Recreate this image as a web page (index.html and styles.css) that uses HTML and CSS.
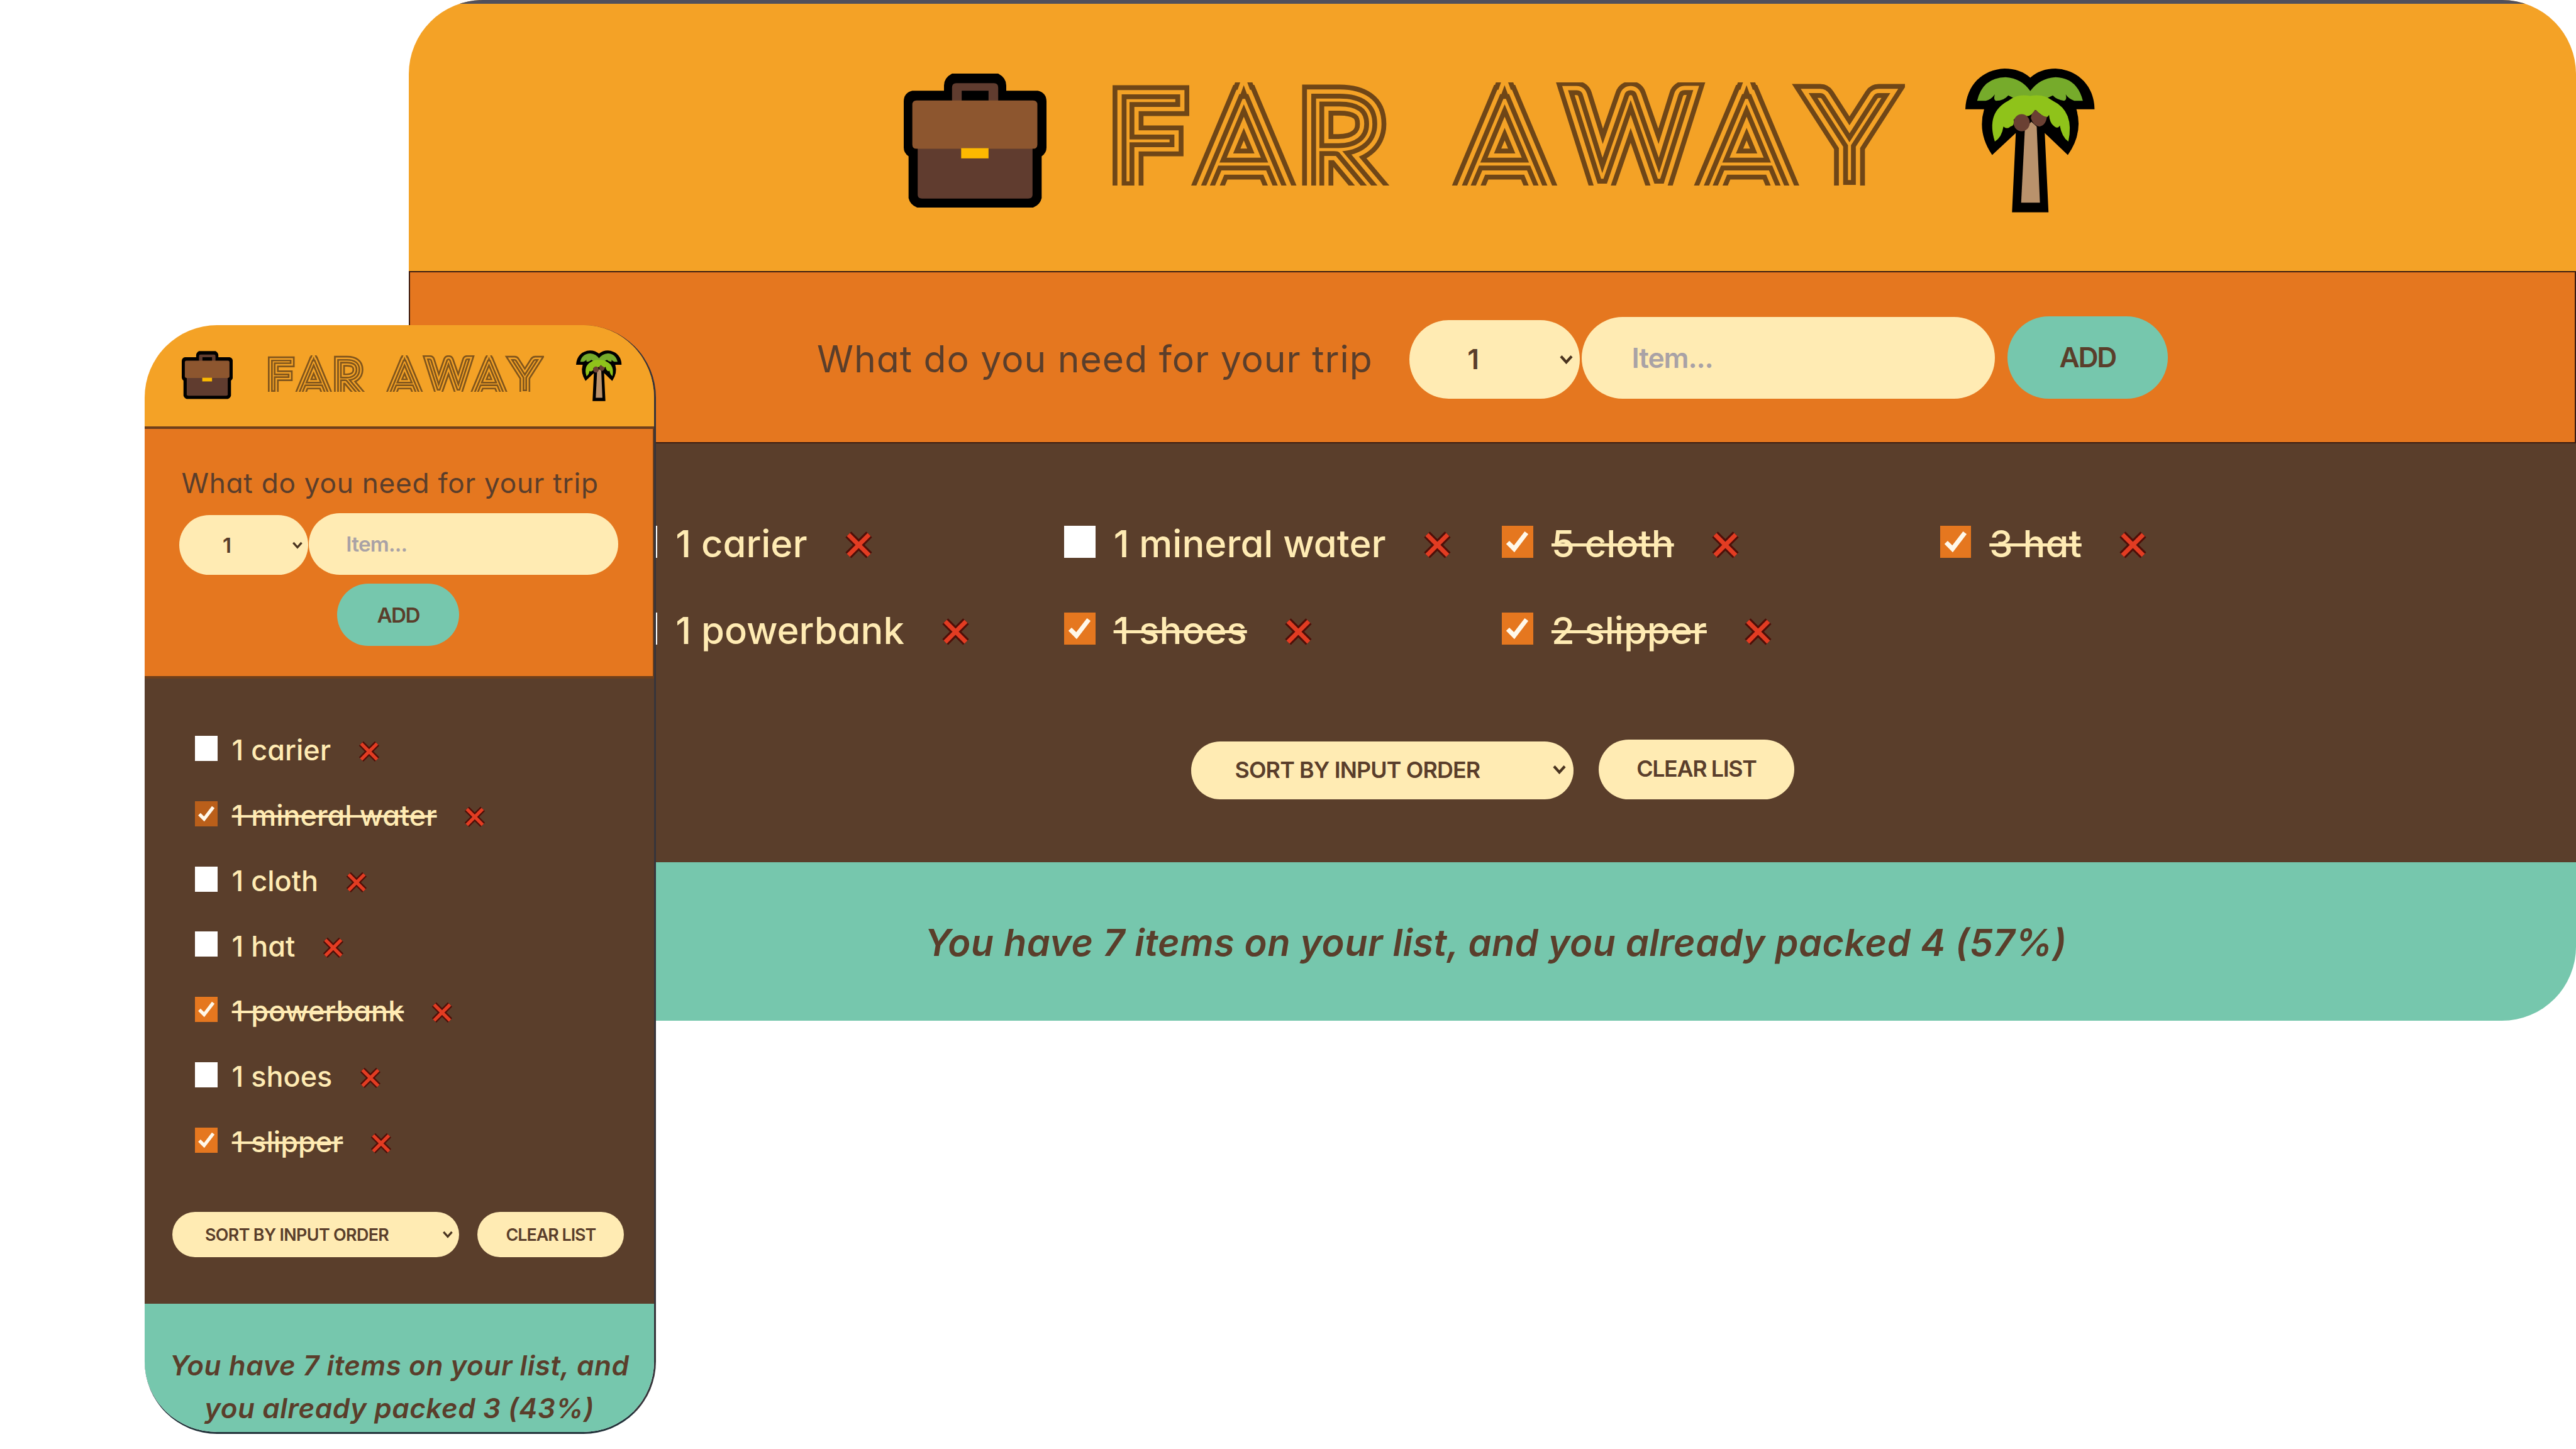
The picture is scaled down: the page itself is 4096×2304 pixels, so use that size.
FILE: index.html
```html
<!DOCTYPE html>
<html lang="en">
<head>
<meta charset="utf-8">
<title>Far Away</title>
<link rel="stylesheet" href="styles.css">
</head>
<body>
<svg class="sprite" width="0" height="0" aria-hidden="true">
  <symbol id="briefcase" viewBox="0 0 266 250">
    <path d="M75 32V22Q75 8 90 0H176Q191 8 191 22V32H250Q266 36 266 52V138Q266 148 257 154V232Q254 245 240 250H26Q12 245 9 232V154Q0 148 0 138V52Q0 36 16 32Z" fill="#000"/>
    <path d="M90 52V26Q90 18 98 18H168Q176 18 176 26V52H158V32H108V52Z" fill="#603c2f"/>
    <path d="M26 132H240V226Q240 233 232 233H34Q26 233 26 226Z" fill="#603c2f"/>
    <path d="M24 50H241Q249 50 249 58V132Q249 140 241 140H24Q16 140 16 132V58Q16 50 24 50Z" fill="#8d562f"/>
    <rect x="107" y="139" width="51" height="19" fill="#fdb900"/>
  </symbol>
  <symbol id="palm" viewBox="0 0 241 268">
    <path d="M73 0Q102 0 121 17Q140 0 168 0C208 2 240 30 241 76H207Q220 120 191 161L148 120L155 268H87L94 120L50 161Q22 120 35 76H0C2 30 32 2 73 0Z" fill="#000"/>
    <path d="M22 60Q32 17 75 16Q105 18 121 42Q138 18 168 16Q208 17 219 60H203Q192 56 187 48Q190 58 184 60Q170 58 163 50L121 70L80 50Q72 60 57 60Q52 58 55 48Q48 58 38 60Z" fill="#76ab2b"/>
    <path d="M121 51Q145 46 163 60Q204 80 192 136Q180 128 176 106Q172 114 164 106Q157 100 156 86Q152 94 144 88L130 77Q122 92 108 88L90 95Q92 108 84 108Q78 114 71 108Q68 128 55 136Q38 82 80 60Q97 46 121 51Z" fill="#8fc31a"/>
    <path d="M111 112L123 99L133 108L139 250H104Z" fill="#b9926c"/>
    <ellipse cx="105" cy="101" rx="15" ry="16" fill="#6a4033"/>
    <path d="M122 92Q124 80 132 77Q140 88 152 90Q150 106 138 108Q126 106 122 92Z" fill="#6a4033"/>
  </symbol>
  <symbol id="cross" viewBox="0 0 54 54">
    <path d="M8 8L46 46M46 8L8 46" stroke="#4d0f08" stroke-width="15" fill="none"/>
    <path d="M8 8L46 46M46 8L8 46" stroke="#e23c22" stroke-width="8" fill="none"/>
  </symbol>
  <symbol id="tick" viewBox="0 0 58 60">
    <path d="M11 31L23 43L46 13" stroke="#fff8ea" stroke-width="8.5" fill="none"/>
  </symbol>
  <symbol id="chevron" viewBox="0 0 26 18">
    <path d="M3 3L13 14L23 3" stroke="#4a3420" stroke-width="5" fill="none"/>
  </symbol>
</svg>

<main class="desktop">
  <header class="header">
    <svg class="bag"><use href="#briefcase"/></svg>
    <svg class="logo" viewBox="0 0 1480 192">
      <g class="line1"><text id="logo-a"><tspan x="6" y="183" font-size="215">F</tspan><tspan x="164" y="217" font-size="264">A</tspan><tspan x="354" y="215" font-size="262">R</tspan> <tspan x="650" y="217" font-size="264">A</tspan><tspan x="860" y="178" font-size="218">W</tspan><tspan x="1101" y="217" font-size="264">A</tspan><tspan x="1316" y="180" font-size="213">Y</tspan></text></g>
      <use class="line2" href="#logo-a"/><use class="line3" href="#logo-a"/><use class="line4" href="#logo-a"/>
    </svg>
    <svg class="tree"><use href="#palm"/></svg>
  </header>
  <form class="form">
    <label class="ask">What do you need for your trip</label>
    <div class="pill qty"><span>1</span><svg class="chev"><use href="#chevron"/></svg></div>
    <div class="pill item-input"><span>Item...</span></div>
    <div class="pill add"><span>ADD</span></div>
  </form>
  <section class="list">
    <ul>
      <li><i class="box"></i><span>1 carier</span><svg class="x"><use href="#cross"/></svg></li>
      <li><i class="box"></i><span>1 mineral water</span><svg class="x"><use href="#cross"/></svg></li>
      <li class="done"><i class="box"><svg><use href="#tick"/></svg></i><span>5 cloth</span><svg class="x"><use href="#cross"/></svg></li>
      <li class="done"><i class="box"><svg><use href="#tick"/></svg></i><span>3 hat</span><svg class="x"><use href="#cross"/></svg></li>
      <li><i class="box"></i><span>1 powerbank</span><svg class="x"><use href="#cross"/></svg></li>
      <li class="done"><i class="box"><svg><use href="#tick"/></svg></i><span>1 shoes</span><svg class="x"><use href="#cross"/></svg></li>
      <li class="done"><i class="box"><svg><use href="#tick"/></svg></i><span>2 slipper</span><svg class="x"><use href="#cross"/></svg></li>
    </ul>
    <div class="actions">
      <div class="pill sort"><span>SORT BY INPUT ORDER</span><svg class="chev"><use href="#chevron"/></svg></div>
      <div class="pill clear"><span>CLEAR LIST</span></div>
    </div>
  </section>
  <footer class="stats"><em>You have 7 items on your list, and you already packed 4 (57%)</em></footer>
</main>

<aside class="phone">
  <header class="header">
    <svg class="bag"><use href="#briefcase"/></svg>
    <svg class="logo" viewBox="0 0 1480 192">
      <g class="line1"><text id="logo-b"><tspan x="6" y="183" font-size="215">F</tspan><tspan x="164" y="217" font-size="264">A</tspan><tspan x="354" y="215" font-size="262">R</tspan> <tspan x="650" y="217" font-size="264">A</tspan><tspan x="860" y="178" font-size="218">W</tspan><tspan x="1101" y="217" font-size="264">A</tspan><tspan x="1316" y="180" font-size="213">Y</tspan></text></g>
      <use class="line2" href="#logo-b"/><use class="line3" href="#logo-b"/><use class="line4" href="#logo-b"/>
    </svg>
    <svg class="tree"><use href="#palm"/></svg>
  </header>
  <form class="form">
    <label class="ask">What do you need for your trip</label>
    <div class="row">
      <div class="pill qty"><span>1</span><svg class="chev"><use href="#chevron"/></svg></div>
      <div class="pill item-input"><span>Item...</span></div>
    </div>
    <div class="pill add"><span>ADD</span></div>
  </form>
  <section class="list">
    <ul>
      <li><i class="box"></i><span>1 carier</span><svg class="x"><use href="#cross"/></svg></li>
      <li class="done hover"><i class="box"><svg><use href="#tick"/></svg></i><span>1 mineral water</span><svg class="x"><use href="#cross"/></svg></li>
      <li><i class="box"></i><span>1 cloth</span><svg class="x"><use href="#cross"/></svg></li>
      <li><i class="box"></i><span>1 hat</span><svg class="x"><use href="#cross"/></svg></li>
      <li class="done"><i class="box"><svg><use href="#tick"/></svg></i><span>1 powerbank</span><svg class="x"><use href="#cross"/></svg></li>
      <li><i class="box"></i><span>1 shoes</span><svg class="x"><use href="#cross"/></svg></li>
      <li class="done"><i class="box"><svg><use href="#tick"/></svg></i><span>1 slipper</span><svg class="x"><use href="#cross"/></svg></li>
    </ul>
    <div class="actions">
      <div class="pill sort"><span>SORT BY INPUT ORDER</span><svg class="chev"><use href="#chevron"/></svg></div>
      <div class="pill clear"><span>CLEAR LIST</span></div>
    </div>
  </section>
  <footer class="stats"><em>You have 7 items on your list, and<br>you already packed 3 (43%)</em></footer>
</aside>
</body>
</html>
```
FILE: styles.css
```css
* { box-sizing: border-box; margin: 0; padding: 0; }

html { font-size: 8.53333px; }

body {
  width: 480rem;
  height: 270rem;
  overflow: hidden;
  background: #fff;
  color: #5a3e2b;
  font-family: Inter, "Open Sans", sans-serif;
  font-feature-settings: "cv11";
  white-space: nowrap;
}

.sprite { position: absolute; }
svg { display: block; flex: none; }
ul { list-style: none; }
em { display: block; }

.header { display: flex; background: #f4a226; }
.logo { font-family: Lato, sans-serif; font-weight: 100; }
.line1 { stroke: #6f4617; stroke-width: 55; }
.line2 { stroke: #f4a226; stroke-width: 37; }
.line3 { stroke: #6f4617; stroke-width: 21; }
.line4 { stroke: #f4a226; stroke-width: 3; fill: #f4a226; }

.form { display: flex; background: #e5771f; }
.ask { letter-spacing: 0.0165em; }
.pill {
  display: flex;
  align-items: center;
  flex: none;
  border-radius: 10rem;
  background: #ffebb3;
  font-weight: 600;
}
.qty, .sort { justify-content: space-between; }
.add, .clear { justify-content: center; }
.add { background: #76c7ad; letter-spacing: -0.05em; }
.item-input { color: #a9a2a6; letter-spacing: -0.024em; }
.sort { letter-spacing: -0.024em; }
.clear { letter-spacing: -0.038em; }

.list { background: #5a3e2b; color: #ffebb3; }
.list li { display: flex; align-items: center; font-weight: 500; }
.list .pill { color: #5a3e2b; }
.box { flex: none; background: #fff; }
.box svg { width: 100%; height: 100%; }
.done .box { background: #e5771f; }
.hover .box { background: #ba5f1a; }
.done span { text-decoration: line-through; }
.actions { display: flex; align-items: flex-end; }

.stats { background: #76c7ad; font-weight: 600; }

/* Wide window */
.desktop {
  width: 403.8rem;
  height: 190.2rem;
  margin-left: 76.2rem;
  border-radius: 13.8rem;
  overflow: hidden;
}
.desktop .header {
  height: 50.5rem;
  border-top: 0.8rem solid #50505c;
  padding-left: 92.2rem;
}
.desktop .bag { width: 26.6rem; height: 25rem; margin-top: 13rem; }
.desktop .logo { width: 148rem; height: 19.2rem; margin: 14.7rem 0 0 12rem; }
.desktop .tree { width: 24.1rem; height: 26.8rem; margin: 12.1rem 0 0 11.2rem; }
.desktop .form {
  height: 32.1rem;
  border: 0.35rem solid #3a1c12;
  padding: 0 0 8.1rem 75.8rem;
  align-items: flex-end;
  font-size: 5.2rem;
}
.desktop .ask { width: 110.4rem; font-size: 6.9rem; line-height: 14.6rem; }
.desktop .qty { width: 31.8rem; height: 14.6rem; padding: 0 1.2rem 0 10.8rem; }
.desktop .chev { width: 2.7rem; height: 1.8rem; }
.desktop .item-input { width: 77rem; height: 15.2rem; margin-left: 0.3rem; padding-left: 9.3rem; }
.desktop .add { width: 29.9rem; height: 15.3rem; margin-left: 2.3rem; }
.desktop .list { height: 78.1rem; padding-top: 10.5rem; font-size: 7rem; }
.desktop .list ul { display: grid; grid-template-columns: repeat(4, 81.6rem); grid-auto-rows: 16.2rem; padding-left: 40.5rem; }
.desktop .box { width: 5.8rem; height: 6rem; margin: -0.5rem 3.4rem 0 0; }
.desktop .x { width: 5.5rem; height: 5.5rem; margin: 0.6rem 0 0 6.8rem; }
.desktop .actions { margin-top: 12.3rem; padding-left: 145.7rem; gap: 4.7rem; font-size: 4.2rem; }
.desktop .sort { width: 71.3rem; height: 10.7rem; padding: 0 1.3rem 0.3rem 8.2rem; }
.desktop .clear { width: 36.4rem; height: 11.1rem; padding-bottom: 0.3rem; }
.desktop .stats { height: 29.5rem; padding-left: 96.1rem; font-size: 6.95rem; line-height: 30rem; letter-spacing: 0.008em; }

/* Narrow window, lying over the wide one */
.phone {
  position: absolute;
  left: 27rem;
  top: 60.6rem;
  width: 95.2rem;
  height: 206.6rem;
  border-right: 0.4rem solid #36343a;
  border-bottom: 0.4rem solid #22323a;
  border-radius: 13.5rem;
  overflow: hidden;
}
.phone .header { height: 18.9rem; padding-left: 6.9rem; }
.phone .bag { width: 9.5rem; height: 9rem; margin-top: 4.8rem; }
.phone .logo { width: 51.6rem; height: 6.8rem; margin: 5.6rem 0 0 6.4rem; }
.phone .line1, .phone .line3 { stroke: #80551c; }
.phone .tree { width: 8.5rem; height: 9.5rem; margin: 4.7rem 0 0 6rem; }
.phone .form {
  height: 47rem;
  flex-direction: column;
  border: 0.5rem solid #6e3f1b;
  border-left: 0;
  border-right-width: 0.3rem;
  font-size: 3.9rem;
}
.phone .ask { height: 15.7rem; padding: 7.6rem 0 0 6.8rem; font-size: 5.18rem; line-height: 5rem; }
.phone .row { display: flex; align-items: flex-end; padding-left: 6.4rem; }
.phone .qty { width: 24rem; height: 11.2rem; padding: 0 0.9rem 0 8.1rem; }
.phone .chev { width: 2.1rem; height: 1.4rem; }
.phone .item-input { width: 57.7rem; height: 11.5rem; margin-left: 0.1rem; padding-left: 7rem; }
.phone .add { width: 22.8rem; height: 11.6rem; margin: 1.6rem 0 0 35.8rem; }
.phone .list { height: 116.4rem; padding-top: 7.2rem; font-size: 5.27rem; }
.phone .list ul { padding-left: 9.3rem; }
.phone .list li { height: 12.16rem; }
.phone .box { width: 4.3rem; height: 4.7rem; margin: -0.6rem 2.6rem 0 0; }
.phone .x { width: 4.2rem; height: 4.2rem; margin: 0.6rem 0 0 5rem; }
.phone .actions { margin-top: 7rem; padding-left: 5.1rem; gap: 3.5rem; font-size: 3.15rem; }
.phone .sort { width: 53.4rem; height: 8.4rem; padding: 0 1rem 0 6.1rem; }
.phone .clear { width: 27.3rem; height: 8.4rem; }
.phone .stats { height: 24rem; padding-top: 7.5rem; text-align: center; font-size: 5.15rem; line-height: 8rem; letter-spacing: 0.013em; }
```
